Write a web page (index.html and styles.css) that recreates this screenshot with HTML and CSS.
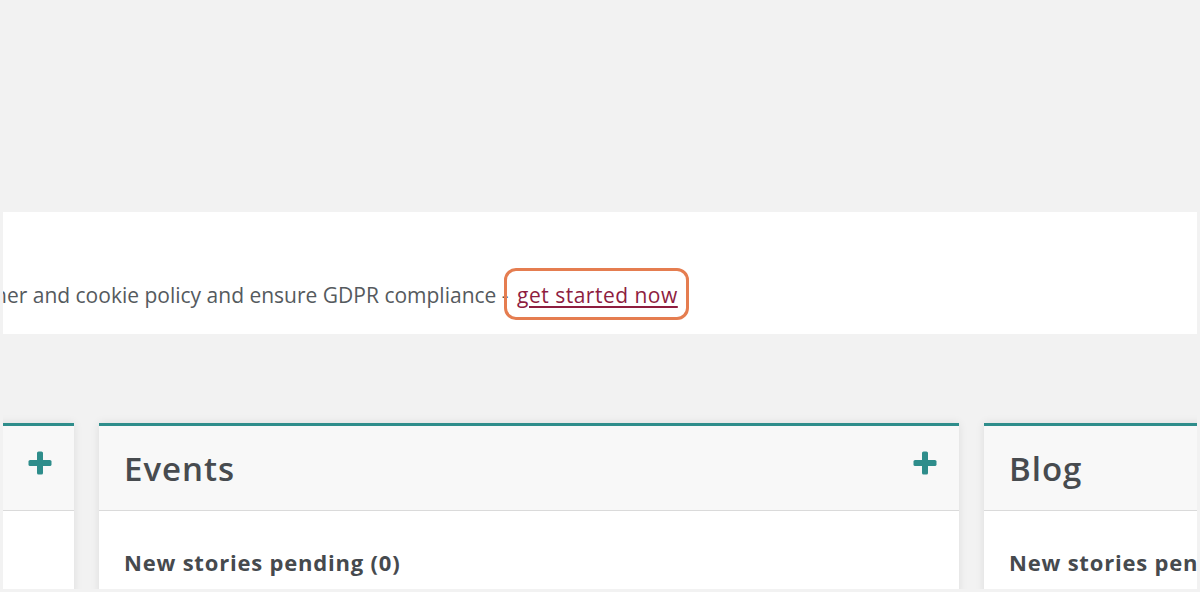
FILE: index.html
```html
<!DOCTYPE html>
<html lang="en">
<head>
<meta charset="utf-8">
<title>Dashboard</title>
<link rel="stylesheet" href="styles.css">
</head>
<body>
<div class="frame">
  <div class="top-space"></div>
  <div class="banner">
    <p class="banner-text">ner and cookie policy and ensure GDPR compliance - <span class="highlight"><a class="banner-link" href="#">get started now</a></span></p>
  </div>
  <div class="cards">
    <section class="card">
      <header class="card-head">
        <h2 class="card-title">News</h2>
        <svg class="plus" viewBox="0 0 24 24" width="24" height="24" aria-hidden="true"><rect x="9" y="0.5" width="6" height="23" rx="1.6"/><rect x="0.5" y="9" width="23" height="6" rx="1.6"/></svg>
      </header>
      <div class="card-body"><h3 class="card-sub">New stories pending (0)</h3></div>
    </section>
    <section class="card">
      <header class="card-head">
        <h2 class="card-title">Events</h2>
        <svg class="plus" viewBox="0 0 24 24" width="24" height="24" aria-hidden="true"><rect x="9" y="0.5" width="6" height="23" rx="1.6"/><rect x="0.5" y="9" width="23" height="6" rx="1.6"/></svg>
      </header>
      <div class="card-body"><h3 class="card-sub">New stories pending (0)</h3></div>
    </section>
    <section class="card">
      <header class="card-head">
        <h2 class="card-title">Blog</h2>
        <svg class="plus" viewBox="0 0 24 24" width="24" height="24" aria-hidden="true"><rect x="9" y="0.5" width="6" height="23" rx="1.6"/><rect x="0.5" y="9" width="23" height="6" rx="1.6"/></svg>
      </header>
      <div class="card-body"><h3 class="card-sub">New stories pending (0)</h3></div>
    </section>
  </div>
</div>
</body>
</html>
```

FILE: styles.css
```css
html, body {
  margin: 0;
  padding: 0;
  background: #f2f2f2;
  font-family: "Open Sans", "Liberation Sans", sans-serif;
}

.frame {
  margin: 0 3px;
  height: 589px;
  overflow: hidden;
}

.top-space {
  height: 212px;
}

.banner {
  background: #ffffff;
  padding: 56px 0 14px;
  overflow: hidden;
}

.banner-text {
  margin: 0;
  font-size: 21px;
  line-height: 28px;
  color: #555a5e;
  white-space: nowrap;
  text-indent: -9px;
}

.highlight {
  display: inline-block;
  text-indent: 0;
  border: 3px solid #e57d50;
  border-radius: 12px;
  padding: 10px 8px 8px 10px;
  margin-left: -10px;
}

.banner-link {
  color: #8e1d3f;
  letter-spacing: 0.5px;
  text-decoration: underline;
  text-underline-offset: 3px;
  text-decoration-thickness: 2px;
}

.cards {
  display: flex;
  gap: 25px;
  margin-top: 89px;
  margin-left: -789px;
}

.card {
  flex: 0 0 860px;
  background: #ffffff;
  box-shadow: 0 0 9px rgba(0, 0, 0, 0.09);
}

.card-head {
  display: flex;
  align-items: center;
  justify-content: space-between;
  height: 84px;
  padding: 0 22px 0 25px;
  background: #f8f8f8;
  border-top: 3px solid #2e8d8b;
  border-bottom: 1px solid #dadada;
}

.card-title {
  margin: 0;
  font-size: 33px;
  font-weight: 600;
  letter-spacing: 1px;
  color: #474b4f;
}

.plus {
  fill: #2e8d8b;
  margin-bottom: 10px;
}

.card-body {
  padding: 36px 25px 20px;
}

.card-sub {
  margin: 0;
  font-size: 22px;
  font-weight: 700;
  letter-spacing: 0.8px;
  color: #464a4e;
}
```
